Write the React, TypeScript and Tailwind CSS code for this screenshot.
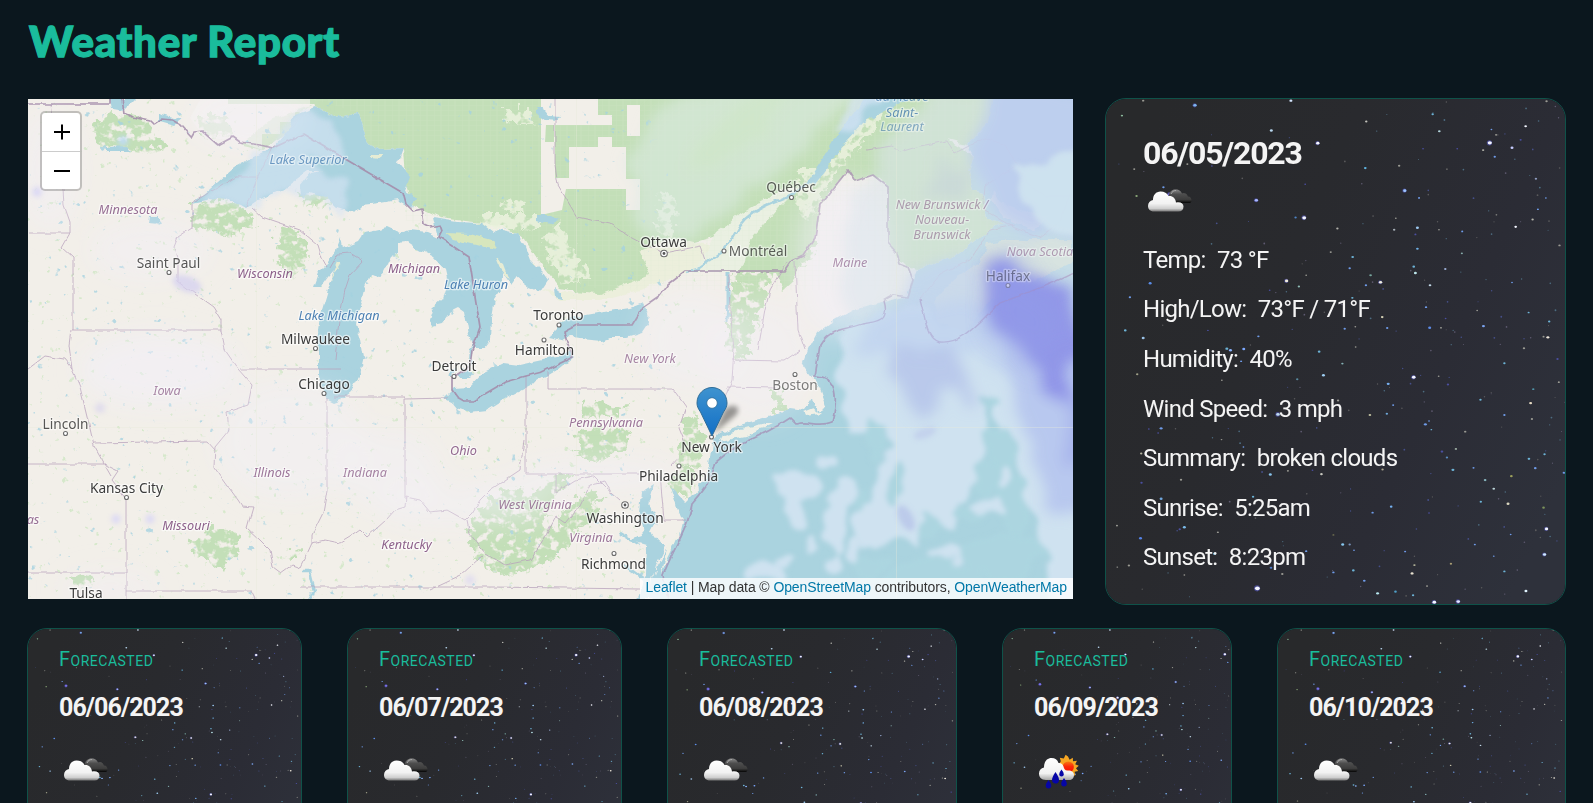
import React from "react";

const WATER = "#aad3df";
const FOREST = "#c3dfb8";
const BORDER = "#b7a0bb";

/* ---------- night sky ---------- */

type Star = [number, number, number, string];

const W = "#f4f6ff";
const B = "#6f9be8";
const C = "#6db3d6";
const G = "#9a9a93";
const V = "#4b4fa0";

const STARS: Star[] = [
  [683, 157, 5.5, W], [1201, 156, 7, W], [1268, 171, 5, "#c6ccff"], [642, 382, 6.5, W], [616, 381, 4, "#4d83c4"],
  [498, 329, 5.5, "#a9b8ff"], [238, 312, 7, "#7a70e8"], [218, 290, 4, B], [313, 43, 5.5, "#7db8f0"], [602, 29, 5, "#d5e6ff"],
  [157, 29, 4, G], [93, 74, 4, "#8ab89a"], [543, 119, 5, "#b9d8f0"], [829, 92, 4, "#c4c4bc"], [1029, 70, 4, C],
  [1049, 121, 4.5, "#b4d4dc"], [1309, 106, 4.5, W], [1372, 31, 4, G], [1206, 116, 3, B], [1220, 132, 3.5, G],
  [1294, 147, 3.5, V], [1181, 178, 4, "#b5b5ab"], [1216, 198, 4, B], [1103, 174, 3, V], [1000, 174, 3, V],
  [826, 232, 4.5, "#5fb4e0"], [928, 225, 4, G], [1072, 235, 2.5, G], [945, 300, 5.5, "#9cc4ff"], [988, 322, 3.5, B],
  [137, 316, 4, "#8aa878"], [130, 235, 3.5, G], [290, 220, 3.5, G], [364, 226, 3, V], [645, 281, 3, V],
  [1340, 264, 4, "#8f9cc0"], [1346, 356, 3.5, B], [1370, 322, 3, B], [1330, 387, 4, "#b5b5ab"], [1279, 409, 4.5, W],
  [1221, 373, 3, G], [983, 412, 5, "#9cc8f0"], [977, 432, 3.5, V], [913, 418, 4, "#a7b0b8"], [742, 414, 4, "#b0b0aa"],
  [918, 383, 3, G], [1048, 418, 3, G], [1118, 423, 3.5, B], [1411, 465, 4, G], [983, 475, 4.5, "#6fb0e6"],
  [788, 500, 4.5, C], [722, 485, 3.5, G], [1117, 489, 3.5, "#86aaa8"], [972, 529, 4.5, C], [977, 548, 5, "#bce6ec"],
  [779, 534, 4, B], [1067, 536, 4, "#9eb0d8"], [842, 555, 4.5, "#76a59d"], [872, 576, 5.5, "#efeede"], [589, 572, 5.5, "#efebdc"],
  [626, 589, 4, "#8dbab4"], [828, 585, 4, B], [1021, 585, 4.5, "#c3d8e8"], [178, 579, 5, "#5b8de8"], [117, 621, 4, B],
  [538, 600, 3, V], [1268, 577, 3, B], [787, 623, 4, C], [648, 555, 3, G], [1009, 651, 4, B],
  [877, 681, 4.5, "#d5d1b5"], [1068, 685, 3, V], [1163, 661, 3, G], [1318, 667, 3.5, C], [1380, 694, 4, C],
  [1182, 708, 5, "#7ca4f0"], [1020, 713, 5, "#5d8ce8"], [1054, 713, 3.5, G], [892, 714, 4, B], [764, 716, 4, B],
  [103, 721, 4.5, C], [157, 744, 5, "#9ac2e8"], [352, 721, 3, V], [504, 739, 4, B], [796, 710, 3, G],
  [1376, 742, 5, "#efe8dc"], [1363, 740, 3.5, G], [1304, 775, 4, G], [797, 771, 3, G], [409, 776, 5, C],
  [420, 781, 5, "#8cb4ff"], [460, 777, 5, "#7ca8ff"], [687, 785, 4.5, C], [452, 814, 3.5, B], [757, 821, 4, "#84b0b4"],
  [1245, 820, 4, C], [1405, 807, 4, V], [700, 856, 5, "#9fd0f5"], [621, 868, 4, "#58889c"], [972, 862, 6, W],
  [895, 882, 5, "#78b0f0"], [1075, 884, 4, V], [1047, 859, 3, G], [1409, 877, 3.5, G], [139, 853, 4, "#a0a088"],
  [394, 871, 3, G], [1332, 898, 4, "#4f93a8"], [1173, 930, 4, C], [1324, 940, 5, "#e8dcc4"], [1328, 988, 4, G],
  [1245, 976, 4, B], [840, 976, 4.5, "#c0c0a0"], [891, 972, 4, "#6fa8d8"], [910, 946, 3.5, B], [1007, 1004, 5, B],
  [1018, 994, 3, B], [1025, 1020, 3, C], [1127, 1026, 4, G], [211, 1016, 5, B], [174, 1018, 3, V],
  [202, 1030, 3, V], [393, 1050, 3, G], [563, 974, 6, "#bfdcf0"], [744, 932, 4, G], [1099, 1078, 4, "#a2b4a8"],
  [1057, 1086, 4.5, V], [1072, 1104, 4, "#5b8cc0"], [1366, 1094, 4, C], [1319, 1108, 4.5, C], [1338, 1136, 4.5, B],
  [1266, 1160, 4.5, "#9da05c"], [1424, 1150, 4, B], [1090, 1141, 5, C], [1152, 1135, 3.5, B], [1187, 1172, 4.5, "#8ab8c0"],
  [1213, 1198, 4.5, "#bcd4d8"], [540, 1155, 5, "#88c4ec"], [694, 1154, 4.5, "#c9c9c0"], [667, 1142, 3, V], [593, 1144, 3.5, G],
  [878, 1140, 4, "#a8a490"], [271, 1171, 4, G], [152, 1180, 4, V], [151, 1092, 4, "#b4b4a0"], [459, 1072, 3, B],
  [211, 1228, 5, "#70a8e0"], [488, 1222, 4, C], [1174, 1237, 4, C], [1256, 1243, 5, "#dcd8c0"], [1363, 1255, 4.5, "#7d935c"],
  [904, 1252, 4.5, "#74b0f0"], [848, 1270, 4, B], [1018, 1271, 3, V], [281, 1314, 5, "#7cbcec"], [267, 1320, 4, V],
  [149, 1347, 5, "#5584e8"], [78, 1309, 3.5, G], [382, 1329, 3.5, G], [1372, 1319, 5.5, W], [1264, 1336, 3, B],
  [758, 1366, 5, "#88c8f0"], [779, 1366, 4, "#7890b8"], [792, 1383, 3, B], [730, 1337, 3.5, "#66664c"], [1366, 1396, 5.5, "#d0ecff"],
  [1156, 1366, 3.5, B], [946, 1387, 3.5, B], [1213, 1401, 3, B], [648, 1386, 4, B], [372, 1394, 5, C],
  [542, 1436, 4.5, "#5580cc"], [576, 1455, 4, G], [790, 1444, 4.5, C], [730, 1450, 4, B], [967, 1453, 5, "#e8e2d0"],
  [974, 1428, 4, "#b4b49a"], [1084, 1424, 4, "#a89c74"], [1245, 1447, 4, C], [823, 1475, 4.5, B], [501, 1498, 8, W],
  [863, 1513, 5, "#b8e8f0"], [917, 1508, 4.5, "#4fa0c8"], [970, 1519, 4, C], [1012, 1491, 3.5, G], [1310, 1506, 5, "#e0f4ff"],
  [1034, 1540, 6, W], [1106, 1538, 6, "#e0e4ff"], [79, 1434, 3, G], [114, 1429, 4, G], [281, 1458, 3, G],
];

const DUST: Star[] = (() => {
  let s = 77;
  const r = () => (s = (s * 16807) % 2147483647) / 2147483647;
  const tints = ["#5a5a5c", "#46508a", "#4d6c80", "#5e5a70"];
  return Array.from({ length: 170 }, () => {
    const x = 50 + 1378 * Math.sqrt(r());
    return [x, 26 + r() * 1510, 1.5 + r() * 1.3, tints[Math.floor(r() * 4)]] as Star;
  });
})();

function NightSky() {
  return (
    <svg className="absolute inset-0 h-full w-full" viewBox="0 0 461 507" preserveAspectRatio="xMinYMin slice" aria-hidden="true">
      <defs>
        <linearGradient id="sky" x1="0" y1="0.25" x2="1" y2="0.75">
          <stop offset="0" stopColor="#28292b" />
          <stop offset="0.35" stopColor="#292a2e" />
          <stop offset="0.7" stopColor="#2b2c35" />
          <stop offset="1" stopColor="#2e313b" />
        </linearGradient>
      </defs>
      <rect width="461" height="507" fill="url(#sky)" />
      <g transform="translate(-15 -8) scale(.3333)">
        {DUST.map(([x, y, r, c], i) => (
          <circle key={"d" + i} cx={x} cy={y} r={r} fill={c} />
        ))}
        {STARS.map(([x, y, r, c], i) => (
          <g key={i}>
            {r > 5 && <circle cx={x - 1} cy={y} r={r * 1.15} fill="#5a5bc8" opacity="0.6" />}
            <ellipse cx={x} cy={y} rx={r * 0.9} ry={r * 0.72} fill={c} />
          </g>
        ))}
      </g>
    </svg>
  );
}

/* ---------- weather icons ---------- */

function BrokenClouds() {
  return (
    <svg width="50" height="50" viewBox="0 0 50 50" aria-hidden="true">
      <defs>
        <linearGradient id="cw" x1="0" y1="0" x2="0" y2="1">
          <stop offset="0" stopColor="#fff" />
          <stop offset="0.6" stopColor="#f2f2f2" />
          <stop offset="0.85" stopColor="#cfcfcf" />
          <stop offset="1" stopColor="#777" />
        </linearGradient>
        <linearGradient id="cd" x1="0" y1="0" x2="0" y2="1">
          <stop offset="0" stopColor="#8a8a8a" />
          <stop offset="0.35" stopColor="#4e4e4e" />
          <stop offset="0.75" stopColor="#3c3c3c" />
          <stop offset="1" stopColor="#050505" />
        </linearGradient>
      </defs>
      <path d="M25.500 20c1-5 4-6.500 7-6.500 4 0 5.500 2 6.500 4 3-1 5 0 6 3 2.500 0 3.500 2 3.500 4s-1 2.500-3 2.500H32z" fill="url(#cd)" />
      <path d="M28 18c1-2.500 3-3.500 5-3.500" stroke="#aaa" strokeWidth="1" fill="none" />
      <path d="M11 35.500c-4 0-6-2.500-6-5.500 0-3.500 2-5.500 5-6 0-5 3-8.500 7.500-8.500 4 0 6.500 1.500 8 4.500 4-.5 7 2 7.500 6.500 4.500-1 7.500 .8 7.500 4s-2 5-5 5z" fill="url(#cw)" />
    </svg>
  );
}

function RainWithSun() {
  return (
    <svg width="50" height="50" viewBox="0 0 50 50" aria-hidden="true">
      <defs>
        <linearGradient id="rc" x1="0" y1="0" x2="0" y2="1">
          <stop offset="0" stopColor="#fff" />
          <stop offset="0.7" stopColor="#f2f2f2" />
          <stop offset="1" stopColor="#a8a8a8" />
        </linearGradient>
        <linearGradient id="sun" x1="0" y1="0" x2="0" y2="1">
          <stop offset="0" stopColor="#f87a12" />
          <stop offset="0.45" stopColor="#fb2a08" />
          <stop offset="1" stopColor="#f30f00" />
        </linearGradient>
      </defs>
      <path d="M34 11.500l1.600 3.200 3.200-2 .2 3.600 4-.6-1.800 3.600 3.600 1.400-2.800 2.500 2.200 2.800-3.600.8.600 4-3.400-1.400-4 1-6-6-2.600-5.600 1.600-2.600-1-3.400 4 .6 1.800-3.600z" fill="#f5a623" />
      <circle cx="34.300" cy="22" r="5.600" fill="url(#sun)" />
      <path d="M12 35c-5 0-7-3-7-6.500s2-5.500 5-6c0-6 3-9.500 7.500-9.500 3.500 0 6 1.500 7 5 2.500-.3 4.500 1.500 5 3.500.5 2 1.200 4 4 4 4-.3 6.500 1.500 6.500 4.500s-2 5-5 5z" fill="url(#rc)" />
      <g fill="#0606a6">
        <path d="M21.500 27c2 3 3.500 5.500 3.500 8s-1.500 3.600-3.500 3.600S18 37.200 18 35s1.500-5 3.500-8z" />
        <path d="M27.500 24.500c1.500 2 2.200 3.400 2.200 4.800s-.9 2.200-2.200 2.200-2.200-.8-2.200-2.200.7-2.800 2.200-4.800z" />
        <path d="M14.500 35c1.700 2.400 2.800 4 2.800 5.800s-1.200 2.700-2.800 2.700-2.800-.9-2.800-2.700 1.200-3.400 2.800-5.800z" />
        <path d="M30 33c1.700 2.400 2.800 4 2.800 5.800s-1.200 2.700-2.800 2.700-2.800-.9-2.800-2.700 1.200-3.400 2.800-5.800z" />
      </g>
    </svg>
  );
}

/* ---------- map ---------- */

type Label = { t: string; x: number; y: number; k: "city" | "state" | "water"; o?: number };

const LABELS: Label[] = [
  { t: "Saint Paul", x: 168.500, y: 268, k: "city", o: 0.85 },
  { t: "Milwaukee", x: 315.500, y: 344, k: "city" },
  { t: "Chicago", x: 324, y: 389, k: "city" },
  { t: "Lincoln", x: 65.500, y: 429, k: "city", o: 0.85 },
  { t: "Kansas City", x: 126.500, y: 492.500, k: "city" },
  { t: "Tulsa", x: 86, y: 598, k: "city" },
  { t: "Detroit", x: 454, y: 371, k: "city" },
  { t: "Toronto", x: 558.500, y: 320, k: "city" },
  { t: "Hamilton", x: 544.500, y: 355, k: "city" },
  { t: "Ottawa", x: 663.500, y: 247, k: "city" },
  { t: "Montréal", x: 758, y: 256, k: "city", o: 0.8 },
  { t: "Québec", x: 791, y: 192, k: "city", o: 0.8 },
  { t: "Boston", x: 795, y: 390, k: "city", o: 0.65 },
  { t: "New York", x: 711.500, y: 452, k: "city" },
  { t: "Philadelphia", x: 678.500, y: 481, k: "city" },
  { t: "Washington", x: 625, y: 523, k: "city" },
  { t: "Richmond", x: 613.500, y: 569, k: "city" },
  { t: "Halifax", x: 1008, y: 280.500, k: "city", o: 0.5 },
  { t: "Minnesota", x: 128, y: 214, k: "state", o: 0.9 },
  { t: "Wisconsin", x: 265, y: 278, k: "state" },
  { t: "Iowa", x: 167, y: 395, k: "state", o: 0.75 },
  { t: "Illinois", x: 272, y: 476.500, k: "state", o: 0.85 },
  { t: "Indiana", x: 365, y: 477, k: "state", o: 0.75 },
  { t: "Missouri", x: 186, y: 530, k: "state" },
  { t: "Michigan", x: 414, y: 272.500, k: "state" },
  { t: "Ohio", x: 463.500, y: 455, k: "state", o: 0.95 },
  { t: "Kentucky", x: 406.500, y: 548.500, k: "state" },
  { t: "West Virginia", x: 535, y: 508.500, k: "state", o: 0.8 },
  { t: "Virginia", x: 591, y: 542, k: "state", o: 0.85 },
  { t: "Pennsylvania", x: 606, y: 427, k: "state", o: 0.85 },
  { t: "New York", x: 650, y: 363, k: "state", o: 0.75 },
  { t: "Maine", x: 850, y: 267, k: "state", o: 0.65 },
  { t: "New Brunswick /", x: 942, y: 209, k: "state", o: 0.55 },
  { t: "Nouveau-", x: 942, y: 224, k: "state", o: 0.55 },
  { t: "Brunswick", x: 942, y: 239, k: "state", o: 0.55 },
  { t: "Nova Scotia", x: 1040, y: 255.500, k: "state", o: 0.55 },
  { t: "as", x: 33, y: 524, k: "state", o: 0.9 },
  { t: "Lake Superior", x: 308, y: 163.500, k: "water", o: 0.75 },
  { t: "Lake Michigan", x: 339, y: 320, k: "water" },
  { t: "Lake Huron", x: 476, y: 289, k: "water" },
  { t: "du Fleuve", x: 902, y: 101, k: "water", o: 0.7 },
  { t: "Saint-", x: 902, y: 117, k: "water", o: 0.8 },
  { t: "Laurent", x: 902, y: 131, k: "water", o: 0.6 },
];

const LABEL_FILL = { city: "#3b3b3b", state: "#8d618b", water: "#4d80b3" };

const DOTS: [number, number][] = [
  [169, 272.500], [315.500, 348.500], [324, 393.500], [65.500, 433.500], [126.500, 497.500], [454, 376.500], [559, 325], [544, 340],
  [724, 251], [791.500, 197.500], [795, 374.500], [711.500, 437], [679, 466], [614, 553.500], [1008, 285.500],
];

const FORESTS = [
  "M96 120l16-6 30 2 14 16 8 18-24 2-28-3-15-5-4-14z",
  "M199 116h30l3 18-22 4-11-4z",
  "M192 205l30-6 14 6 12 8 8 14-18 6-12 4-16-8-18 2z",
  "M278 228l18 3 12 14-2 20-16 14-10-14-4-18z",
  "M301 195l18-1 12 10-8 3-20-3z",
  "M579 402l14 2 8-3 10 6 14-2-4 12-40 1z",
  "M579 430l26-4 26 6-6 20-30 10-20-6z",
  "M470 524l20-26 22-12 16 8 4 26 22 10 22-30 16-12 6 10-20 28-10 22-24 14-30 4-26-14-14-16z",
  "M466 530l30-4 34 6 26 4-10 22-24 12-28 2-20-14z",
  "M525 500l30-26 20 0-20 24-12 30-20 4z",
  "M190 540l22-12 26 2-2 24-16 18-18-14-10-6z",
  "M686 416l12 4 8 24-6 24-22-2 4-28z",
  "M735 250l40 0-10 50-16 50-8 0 2-50z",
  "M731 272l14 20-2 40-8 18-8-4z",
  "M788 228l14-12 16 28-10 22-16-2z",
  "M500 570l40-14 20 0-30 14-28 8z",
  "M570 530l20-20 14-16-8 24-20 16z",
  "M670 485l14-20 14 10-8 22-14 0z",
  "M774 388l10 2 0 22-10 4z",
  "M732 350l14-8 4 12-12 6z",
  "M290 550l10-2-2 12-8 0z",
  "M70 580l20-6 6 8-20 6z",
];

const LAKES = [
  "M191 203L201 197 235 167 261 153 273 147 290 127 295 115 317 107 333 117 358 113 362 127 367 143 380 150 403 149 398 162 410 177 405 190 417 197 413 208 398 200 380 203 361 205 353 213 335 207 325 197 311 193 301 195 300 187 311 173 321 171 308 171 291 183 285 190 258 200 246 208 241 205 228 200 221 197z",
  "M313 287L318 273 328 263 336 250 341 237 343 248 358 242 365 232 387 227 400 233 410 230 427 232 438 237 433 218 457 222 480 223 493 233 497 230 517 234 525 247 530 260 543 273 548 280 540 292 530 288 517 278 512 285 503 272 503 277 502 290 495 300 492 317 491 340 485 348 473 348 468 330 465 313 458 308 450 312 442 323 433 325 429 320 432 310 443 300 448 283 445 270 433 257 420 250 408 242 397 243 397 253 390 257 380 277 370 275 365 287 361 303 356 323 361 340 364 358 360 375 351 392 341 400 333 403 327 400 321 388 319 375 319 355 318 330 321 310 326 293 334 270 329 276 321 287z",
  "M443 398L453 388 470 387 483 373 503 363 520 365 543 360 557 357 570 350 573 357 557 370 537 382 503 400 487 410 470 412 457 408 452 402z",
  "M547 338L560 325 570 318 603 312 630 308 643 303 648 313 649 323 643 332 627 337 610 337 603 340 570 337 562 341z",
  "M458 374l10-2 5 2-3 4-10 0z",
  "M555 287l8 6 0 6-7-2z",
  "M537 216l14 0 8 5-10 3-12-4z",
  "M537 107l8 3 5 6 12 1-3 4-14-1-8-6z",
  "M150 216l8 0 0 9-9-1z",
  "M107 148l20-1 4 5-24 0z",
  "M110 99l26 0-12 12-12-2z",
  "M160 113l14 4 8 2-8 6-14-4z",
];

const BORDERS_THICK = [
  "M28 104H110V99",
  "M122 99L124 113 132 117 150 121 154 125 163 119 172 120 181 125 192 137 195 132 202 131 218 145 233 137 240 142 260 145 273 148 303 134 403 193 406 204 413 211 422 209 424 224 430 227 440 225 442 231 439 237 469 257 474 290 480 327 472 350 470 366 452 378 452 390 457 397 464 401 473 401 505 382 526 376 542 372 573 357 567 342 564 332 577 325 632 325 643 307 659 296 668 284 685 271H784L790 262 803 256 815 238 820 205 848 170 855 181 873 175 888 187 888 243 897 253 900 264 908 267 913 280 908 297 893 295 884 300",
  "M884 300C890 320 878 322 862 324C845 330 830 328 820 345L815 376C838 376 838 400 832 422C818 428 808 420 796 424L790 418C770 432 750 440 736 446L716 462C712 480 706 488 692 504C688 530 672 550 663 576L668 599",
  "M920 299C926 320 926 338 940 342C965 344 980 320 1000 303C1030 292 1050 285 1073 273",
];

const BORDERS_THIN = [
  "M51 104L55 130 63 190 64 205 70 222 70 233 62 247 73 257V330",
  "M28 233H70",
  "M72 330H221L221 320 213 307 195 294 178 281 178 262 174 247 178 237 192 228V205L200 198",
  "M71 330L69 345 72 369 80 387 88 420 94 446 103 462 111 476",
  "M221 330L225 350 238 369 252 385 248 405 227 412 229 430 215 447 214 467 227 485 238 500 242 506 253 507 247 528 260 540 270 550 273 567 281 573 292 565 300 568 306 556 312 543 312 535 323 513 327 490V398",
  "M94 443L207 441 215 450",
  "M28 464H104L118 471 112 480 126 498V599",
  "M28 573H126 M126 591H252L256 599",
  "M240 369H341 M334 397H405V500",
  "M312 543L325 540 340 543 350 537 360 530 367 537 386 520 395 510 405 507 406 497 420 500 430 512 447 510 465 520 472 513 480 500 490 490 520 470 524 440",
  "M405 399L448 398",
  "M526 376V474H640 M548 372V389H673L686 407 679 428 687 448 671 466",
  "M467 520L470 534 485 553 505 565 530 560 545 537 556 517 565 523 580 505 590 484 605 481 612 494",
  "M556 474V492L575 480 594 476 606 488 620 500",
  "M28 369L45 356 64 359 72 369",
  "M483 555L460 576 430 590 M300 587H492L640 589",
  "M660 474L664 520H686",
  "M732 360L784 361 800 350 M727 387L776 388",
  "M786 262L770 290 765 310 758 350 M795 262L798 330 805 350",
  "M729 275L730 310 734 350 732 380 725 400",
  "M252 208L262 217 300 230 318 245 322 258 327 267",
  "M335 360L339 320 345 290 350 275 363 261 350 253 338 254 330 268",
  "M555 99V165L558 185 577 217 610 224 630 237 645 245 665 253 700 246 705 260",
  "M200 198L236 177H258L246 206 M258 177L272 147",
  "M867 150L880 148 892 146 900 152 920 146 947 141 955 153 985 138 1005 145 1020 170 1028 185 1045 196H1073 M1015 166L985 186 983 210 1015 228 1040 237 1060 222 1070 194",
  "M920 299L940 275 970 260 990 230 1015 225",
];

const FOAM: [number, number, number, number][] = [
  [800, 485, 24, 15], [795, 515, 14, 20], [845, 490, 12, 14], [835, 520, 10, 32], [815, 548, 6, 8], [828, 463, 8, 6],
  [765, 570, 20, 10], [790, 560, 10, 8], [832, 565, 6, 12], [853, 552, 8, 14], [990, 507, 20, 7], [1003, 477, 6, 12],
  [950, 555, 18, 6], [870, 525, 18, 22],
];

const CALM: [number, number, number, number][] = [
  [873, 435, 8, 22], [892, 480, 6, 20], [985, 398, 11, 6], [988, 430, 9, 8], [983, 475, 12, 20], [965, 510, 14, 6],
  [1010, 500, 16, 30], [1000, 450, 12, 24], [925, 520, 8, 10], [865, 560, 20, 10], [1000, 550, 40, 24], [930, 575, 50, 20], [858, 500, 7, 16],
];

const HAZE: [number, number, number, number, number][] = [
  [150, 250, 60, 30, 0.5], [160, 370, 80, 36, 0.8], [290, 440, 75, 60, 0.6], [390, 470, 50, 40, 0.6], [110, 590, 50, 20, 0.4], [450, 505, 70, 22, 0.6],
  [600, 475, 80, 14, 0.7], [690, 340, 50, 50, 0.6], [50, 170, 30, 60, 0.5], [250, 120, 60, 30, 0.5], [520, 500, 40, 22, 0.6], [845, 260, 50, 80, 0.8], [760, 360, 50, 60, 0.5],
];

function MapCanvas() {
  return (
    <svg className="block h-full w-full" viewBox="28 99 1045 500" role="img" aria-label="Map">
      <defs>
        <filter id="rough" x="-5%" y="-5%" width="110%" height="110%">
          <feTurbulence type="fractalNoise" baseFrequency="0.09" numOctaves="3" seed="4" />
          <feDisplacementMap in="SourceGraphic" scale="7" xChannelSelector="R" yChannelSelector="G" />
        </filter>
        <filter id="wiggle" x="-5%" y="-5%" width="110%" height="110%">
          <feTurbulence type="fractalNoise" baseFrequency="0.1" numOctaves="2" seed="9" />
          <feDisplacementMap in="SourceGraphic" scale="4" xChannelSelector="R" yChannelSelector="G" />
        </filter>
        <filter id="woods" x="-10%" y="-10%" width="120%" height="120%">
          <feTurbulence type="fractalNoise" baseFrequency="0.12" numOctaves="3" seed="3" result="n" />
          <feDisplacementMap in="SourceGraphic" in2="n" scale="18" xChannelSelector="R" yChannelSelector="G" result="d" />
          <feColorMatrix in="n" type="matrix" values="0 0 0 0 0  0 0 0 0 0  0 0 0 0 0  0 6 0 0 -1.9" result="m" />
          <feComposite in="d" in2="m" operator="in" />
        </filter>
        <filter id="specks" x="0" y="0" width="100%" height="100%">
          <feTurbulence type="fractalNoise" baseFrequency="0.13" numOctaves="3" seed="21" result="n" />
          <feColorMatrix in="n" type="matrix" values="0 0 0 0 0  0 0 0 0 0  0 0 0 0 0  12 0 0 0 -8.7" result="m" />
          <feComposite in="SourceGraphic" in2="m" operator="in" />
        </filter>
        <filter id="ponds" x="0" y="0" width="100%" height="100%">
          <feTurbulence type="fractalNoise" baseFrequency="0.11" numOctaves="3" seed="55" result="n" />
          <feColorMatrix in="n" type="matrix" values="0 0 0 0 0  0 0 0 0 0  0 0 0 0 0  0 12 0 0 -8.9" result="m" />
          <feComposite in="SourceGraphic" in2="m" operator="in" />
        </filter>
        <filter id="soft" x="-30%" y="-30%" width="160%" height="160%">
          <feTurbulence type="fractalNoise" baseFrequency="0.035" numOctaves="2" seed="12" />
          <feDisplacementMap in="SourceGraphic" scale="26" xChannelSelector="R" yChannelSelector="G" />
          <feGaussianBlur stdDeviation="2.6" />
        </filter>
        <filter id="haze" x="-30%" y="-30%" width="160%" height="160%">
          <feGaussianBlur stdDeviation="13" />
        </filter>
        <filter id="billow" x="-30%" y="-30%" width="160%" height="160%">
          <feTurbulence type="fractalNoise" baseFrequency="0.025" numOctaves="2" seed="5" />
          <feDisplacementMap in="SourceGraphic" scale="40" xChannelSelector="R" yChannelSelector="G" />
          <feGaussianBlur stdDeviation="7" />
        </filter>
        <filter id="shade" x="-30%" y="-30%" width="160%" height="160%">
          <feGaussianBlur stdDeviation="2.5" />
        </filter>
        <pattern id="grid" width="14" height="5" patternUnits="userSpaceOnUse">
          <path d="M0 0H14M0 0V5M7 0V5" stroke="#d9ecd0" strokeWidth="0.6" fill="none" />
        </pattern>
        <linearGradient id="pin" x1="0" y1="0" x2="0" y2="1">
          <stop offset="0" stopColor="#3f93cf" />
          <stop offset="1" stopColor="#126fc6" />
        </linearGradient>
      </defs>

      <rect x="28" y="99" width="1045" height="500" fill="#f2efe9" />

      <g fill={FOREST} filter="url(#woods)">
        {FORESTS.map((d, i) => <path key={i} d={d} />)}
      </g>
      <rect x="28" y="99" width="680" height="500" fill="#d3e8c8" opacity="0.9" filter="url(#specks)" />

      {/* northern woodland */}
      <g filter="url(#rough)">
        <path d="M310 80L1000 80 988 122 967 145 947 140 973 155 968 170 973 190 983 193 987 217 1003 223 980 237 953 257 917 270 907 267 895 255 888 240 888 187 873 175 855 181 848 170 820 205 815 238 803 256 795 280 784 290 776 272 740 272 720 235 660 252 665 262 650 280 603 297 560 288 545 270 525 240 500 225 440 218 412 205 405 180 403 149 380 150 367 143 362 127 358 113 333 117 317 107z" fill={FOREST} />
        <path d="M270 120L315 104 300 112 292 128 262 150 240 145z" fill={FOREST} opacity="0.7" />
        <path d="M640 252L670 236 720 248 700 266 670 280 640 290 600 300 560 300 540 290 600 294 650 275z" fill="#ecefdc" />
        <path d="M700 262L716 232 740 214 780 190 800 186 780 206 750 240 740 272 690 272z" fill="#eaf0e2" />
      </g>
      <path d="M228 99H600V104H228z" fill={FOREST} />
      <path d="M310 99H1000V290H600L405 220V150H362L350 110z" fill="url(#grid)" opacity="0.4" />
      <path d="M541 99H598V115H612V125H541z M541 125H555V178H569V147H598V137H612V147H626V179H640V210H626V189H566L562 210 541 215z M627 105H640V136H627z" fill="#f2efe9" />
      <path d="M546 125H554V142H545z" fill={FOREST} />
      <path d="M225 99H310V112H295V122H280V134H262V150L235 140 205 138 190 118 200 100z" fill="#f5f2f0" opacity="0.6" />
      <g filter="url(#woods)" fill="#eaf1dd" opacity="0.9">
        <path d="M500 110l26 0 10 14-26 0z M505 200l20 2-6 12-18-4z M560 220l30 60-26 4-24-40z M660 190l16 10-4 40-14-10z M480 215h60v14h-60z M800 170l28 0 30-50 30-18-10 24-40 44-30 50-10-10z" />
      </g>

      {/* ocean */}
      <g filter="url(#rough)" fill={WATER}>
        <path d="M1100 60H1000L990 110 988 122 967 145 973 155 968 170 973 190 983 193 987 217 1003 223 980 237 953 257 917 270 913 280 907 297 883 303 853 310 830 323 817 333 808 350 803 365 810 375 820 387 827 408 820 412 812 398 804 410 790 408 773 415 740 425 720 433 712 442 710 458 707 478 692 495 685 502 670 486 677 508 683 522 680 535 667 548 657 565 653 578 650 620H1100z" />
        <path d="M870 90L853 115 833 140 820 163 807 183 815 184 827 168 847 140 863 123 883 112 930 90z" />
        <path d="M807 183C790 200 770 200 750 215C735 225 735 240 722 252L700 268 686 272" fill="none" stroke={WATER} strokeWidth="2.500" />
        <path d="M642 492L653 485 648 502 657 518 650 532 657 542 665 546 656 565 652 580 655 599H636L646 575 647 545 630 540 643 536 640 515z" />
        <path d="M728 272v30l-1 20M640 545l-20-12M645 580l-20-14" fill="none" stroke={WATER} strokeWidth="3" />
        {LAKES.map((d, i) => <path key={i} d={d} />)}
        <path d="M448 376L456 369M472 347L471 366M300 572L309 572 314 592 310 599" fill="none" stroke={WATER} strokeWidth="2.500" />
      </g>
      <rect x="28" y="100" width="640" height="499" fill="#a5d2e0" opacity="0.8" filter="url(#ponds)" />
      <g filter="url(#rough)" fill="#f0f0e6">
        <path d="M721 441L747 436 773 424 766 424 740 430 724 435z" />
        <path d="M446 233L470 234 492 240 496 250 480 246 455 240z" fill="#d7e6bd" />
        <path d="M496 258l8 6 6 16-10-12z M372 155l9 0-1 4-8-1z M338 262l4 0-12 20z" fill="#e6ecd4" />
        <path d="M937 297L953 280 980 263 987 243 1007 240 1073 240V262L1030 283 987 303 967 330 950 328 935 317z" fill="#d3e0d0" />
        <path d="M993 190L992 200 1003 217 1033 230 1050 215 1030 213 1010 207 998 200z" fill="#dfe3e0" />
        <path d="M668 545L681 528 672 550 660 575z" />
        <path d="M803 412l10-4 8 6-16 2z" />
      </g>

      {/* administrative lines */}
      <g fill="none" strokeLinejoin="round" filter="url(#wiggle)">
        {BORDERS_THIN.map((d, i) => <path key={i} d={d} stroke={BORDER} strokeWidth="1" opacity="0.75" />)}
        {BORDERS_THICK.map((d, i) => <path key={i} d={d} stroke="#a48dab" strokeWidth="1.700" opacity={i > 1 ? 0.6 : 0.9} />)}
      </g>

      {/* cloud cover */}
      <g filter="url(#haze)" fill="#f2f0fb">
        {HAZE.map(([x, y, rx, ry, o], i) => <ellipse key={i} cx={x} cy={y} rx={rx} ry={ry} opacity={o * 0.65} />)}
      </g>
      <g filter="url(#soft)" fill="#d6e4f5" opacity="0.72">
        <path d="M285 125L310 110 330 125 345 150 335 160 310 158 330 175 345 190 350 215 330 205 290 190 250 205 200 200 240 175z" opacity="0.85" />
        <path d="M860 90L900 90 850 130 835 130z" />
      </g>
      <g filter="url(#billow)">
        <path d="M630 160L660 110 720 80H860L800 150 770 175 740 215 690 240 640 230z" fill="#dcebe6" opacity="0.55" />
        <path d="M690 150L760 90H800L740 150 690 180z" fill="#cfe8c4" opacity="0.5" />
        <path d="M850 190L930 90H1100V360H910L840 300z" fill="#dbe5ec" opacity="0.55" />
        <path d="M990 80H1110V240L1000 230 980 180z" fill="#bccdf0" opacity="0.85" />
        <path d="M900 280L970 250 990 340H900z" fill="#c3d4f0" opacity="0.6" />
        <path d="M930 165L975 160 960 200 925 200z" fill="#c3cfda" opacity="0.5" />
      </g>
      <g filter="url(#soft)">
        <path d="M1015 170L1090 145V225L1060 240 1030 215z" fill="#d1e6ef" opacity="0.8" />
        <path d="M838 335L870 318 910 300 940 330 1090 330V610H1050L1042 540 1018 460 1005 445 992 400 986 400 990 440 970 490 952 530 925 520 920 545 880 545 870 520 875 470 890 450 885 425 862 435 850 440 842 400z" fill="#cfe2f0" />
        {CALM.map(([x, y, rx, ry], i) => <ellipse key={i} cx={x + 4} cy={y + 4} rx={rx} ry={ry} fill="#acd5e0" />)}
        {FOAM.map(([x, y, rx, ry], i) => <ellipse key={i} cx={x} cy={y} rx={rx} ry={ry} fill="#cfe2f0" />)}
      </g>
      <g filter="url(#billow)">
        <path d="M845 345L870 315 960 300 1010 310 1020 380 960 350 880 355z" fill="#c1d3ef" opacity="0.8" />
        <path d="M895 345L950 335 968 385 985 400 945 395 925 412 905 410 893 375z" fill="#b4c3ea" opacity="0.8" />
        <path d="M1000 340H1100V500L1050 515 1035 450 1018 400z" fill="#b6c6ee" opacity="0.95" />
        <path d="M985 265L1020 262 1066 290 1080 350 1078 405 1045 395 1030 345 990 338z" fill="#8f94e8" opacity="0.95" />
        <path d="M1055 400H1100V460L1070 465z" fill="#a5b0ec" opacity="0.8" />
      </g>
      <g filter="url(#haze)" fill="#9299e8">
        <path d="M988 262L1018 258 1030 290 1060 300 1062 345 1040 370 1016 342 990 335z" opacity="0.75" />
      </g>
      <g filter="url(#shade)">
        <ellipse cx="906" cy="518" rx="7" ry="14" transform="rotate(-28 906 518)" fill="#bccbea" />
        <ellipse cx="925" cy="433" rx="12" ry="5" transform="rotate(-20 925 433)" fill="#c3d2ec" />
        <ellipse cx="187" cy="284" rx="15" ry="8" transform="rotate(20 187 284)" fill="#d6d2ef" opacity="0.8" />
        <circle cx="116" cy="519" r="4.500" fill="#dcd9f4" />
        <circle cx="150" cy="519" r="4.500" fill="#dcd9f4" />
        <circle cx="100" cy="408" r="5" fill="#e0dcec" />
        <circle cx="37" cy="192" r="5" fill="#dcd9f4" />
        <circle cx="470" cy="580" r="5" fill="#e2deee" />
        <circle cx="123" cy="141" r="5" fill="#bfdcf2" />
      </g>
      <g fill="none" stroke="#a48dc0" strokeWidth="1.300" opacity="0.4" filter="url(#wiggle)">
        <path d={BORDERS_THICK[2]} />
        <path d={BORDERS_THICK[3]} />
      </g>
      <path d="M28 427.500H1073M256.500 99V599M576.500 99V599M896.500 99V599" stroke="#e6ead8" strokeWidth="0.700" opacity="0.5" />

      {/* place names */}
      <g fontFamily='"Noto Sans", sans-serif' textAnchor="middle" paintOrder="stroke" stroke="#ffffff" strokeOpacity="0.6" strokeWidth="2.600" strokeLinejoin="round">
        {LABELS.map((l) => (
          <text
            key={l.t + l.x}
            x={l.x}
            y={l.y}
            fontSize={l.k === "city" ? 13.7 : 12.7}
            fontStyle={l.k === "city" ? "normal" : "italic"}
            fill={LABEL_FILL[l.k]}
            opacity={l.o ?? 1}
          >
            {l.t}
          </text>
        ))}
      </g>
      <g fill="#fff" stroke="#6b6b6b" strokeWidth="1.100">
        {DOTS.map(([x, y], i) => <circle key={i} cx={x} cy={y} r="2" opacity={x > 1000 ? 0.5 : 1} />)}
        <circle cx="664" cy="253.500" r="3.300" />
        <circle cx="625" cy="505" r="3.300" />
      </g>
      <circle cx="664" cy="253.500" r="1.400" fill="#555" />
      <circle cx="625" cy="505" r="1.400" fill="#555" />

      {/* marker */}
      <path d="M713 434L736 415C742 407 734 402 725 409z" fill="#000" opacity="0.38" filter="url(#shade)" />
      <path d="M712 436L700.500 412C698 408.500 697 406 697 403C697 394 704 387.500 712 387.500S727 394 727 403C727 406 726 408.500 723.500 412z" fill="url(#pin)" stroke="#2e6c97" strokeWidth="1" />
      <circle cx="712" cy="403" r="5.300" fill="#fff" stroke="#2e6c97" strokeWidth="0.800" />
    </svg>
  );
}

function WeatherMap() {
  return (
    <div className="relative h-[500px] w-[1045px] shrink-0 overflow-hidden bg-[#f2efe9]">
      <MapCanvas />
      <div className="absolute top-3 left-3 flex w-[42px] flex-col overflow-hidden rounded-[5px] border-2 border-black/20 bg-white bg-clip-padding text-black">
        <button aria-label="Zoom in" className="flex h-[39px] items-center justify-center border-b border-[#ccc] pl-[2px]">
          <svg width="16" height="16" viewBox="0 0 16 16"><path d="M0 8H16M8 .5V15.500" stroke="#000" strokeWidth="2" /></svg>
        </button>
        <button aria-label="Zoom out" className="flex h-[37px] items-center justify-center pl-[2px]">
          <svg width="16" height="16" viewBox="0 0 16 16"><path d="M0 8H16" stroke="#000" strokeWidth="2" /></svg>
        </button>
      </div>
      <div className="absolute right-0 bottom-0 flex h-[21px] items-start bg-white/80 px-[6px] font-['Liberation_Sans',sans-serif] text-[14px] leading-[18px] tracking-[-0.1px] whitespace-pre text-[#333]">
        <span className="text-[#0078a8]">Leaflet</span> | Map data © <span className="text-[#0078a8]">OpenStreetMap</span> contributors, <span className="text-[#0078a8]">OpenWeatherMap</span>
      </div>
    </div>
  );
}

/* ---------- cards ---------- */

const DETAILS = [
  ["Temp:", "73 °F"],
  ["High/Low:", "73°F / 71°F"],
  ["Humidity:", "40%"],
  ["Wind Speed:", "3 mph"],
  ["Summary:", "broken clouds"],
  ["Sunrise:", "5:25am"],
  ["Sunset:", "8:23pm"],
];

const FORECAST = [
  { date: "06/06/2023", rain: false, width: "w-[275px]" },
  { date: "06/07/2023", rain: false, width: "w-[275px]" },
  { date: "06/08/2023", rain: false, width: "w-[290px]" },
  { date: "06/09/2023", rain: true, width: "w-[230px]" },
  { date: "06/10/2023", rain: false, width: "w-[289px]" },
];

function TodayCard() {
  return (
    <section className="relative -mt-px h-[507px] w-[461px] shrink-0 overflow-hidden rounded-[21px] border border-[#0f5249]">
      <NightSky />
      <div className="relative pt-[35px] pl-[37px]">
        <h2 className="text-[32px] leading-[38px] font-bold tracking-[-1.2px]">06/05/2023</h2>
        <div className="mt-[4px] h-[50px]"><BrokenClouds /></div>
        <dl className="mt-[9px] text-[24px] tracking-[-0.74px]">
          {DETAILS.map(([k, v]) => (
            <div key={k} className="flex h-[49.6px] items-center gap-[11.500px]">
              <dt>{k}</dt>
              <dd>{v}</dd>
            </div>
          ))}
        </dl>
      </div>
    </section>
  );
}

export default function App() {
  return (
    <main className="h-screen overflow-hidden bg-[#0b171e] pl-[27px] font-['Roboto',sans-serif] text-[#f4f4f4]">
      <h1 className="flex h-[99px] items-start pt-[14px] pl-[2px] font-['Lato',sans-serif] text-[42px] leading-[54px] font-black tracking-[0.7px] text-[#1abc9c] [-webkit-text-stroke:1.3px_#1abc9c]">Weather Report</h1>
      <div className="flex items-start gap-[32px] pl-px">
        <WeatherMap />
        <TodayCard />
      </div>
      <div className="mt-[23px] flex gap-[45px]">
        {FORECAST.map((f) => (
          <section key={f.date} className={`relative h-[294px] shrink-0 overflow-hidden rounded-[20px] border border-[#0f5249] ${f.width}`}>
            <NightSky />
            <div className="relative pt-[17px] pl-[31px]">
              <p className="h-[26px] text-[14px] leading-[26px] tracking-[0.5px] text-[#1abc9c] uppercase first-letter:text-[20px]">Forecasted</p>
              <h3 className="mt-[20px] text-[25px] leading-[32px] font-bold tracking-[-0.95px]">{f.date}</h3>
              <div className="mt-[21px]">{f.rain ? <RainWithSun /> : <BrokenClouds />}</div>
            </div>
          </section>
        ))}
      </div>
    </main>
  );
}
